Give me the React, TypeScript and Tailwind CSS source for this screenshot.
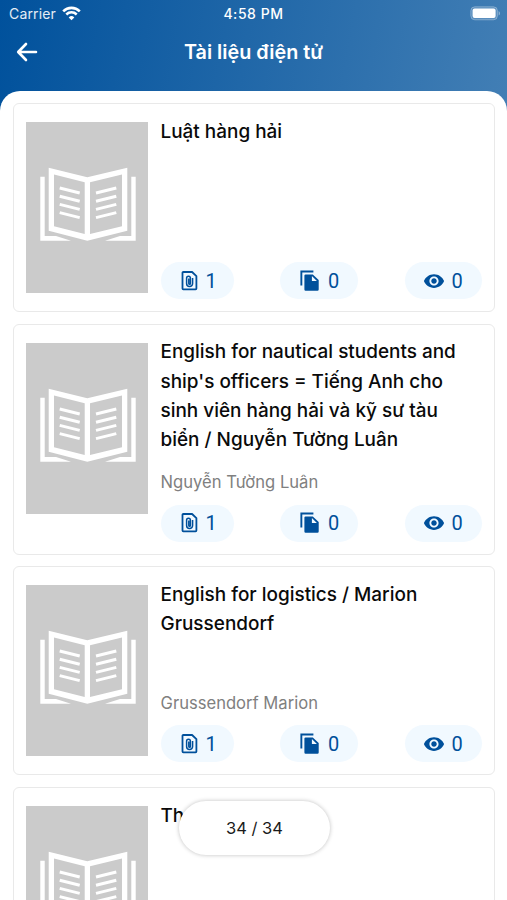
import React from "react";
import { MdVisibility } from "react-icons/md";

interface Doc {
  title: string;
  author?: string;
  stats?: { files: number; copies: number; views: number };
}

const docs: Doc[] = [
  { title: "Luật hàng hải", stats: { files: 1, copies: 0, views: 0 } },
  {
    title:
      "English for nautical students and ship's officers = Tiếng Anh cho sinh viên hàng hải và kỹ sư tàu biển / Nguyễn Tường Luân",
    author: "Nguyễn Tường Luân",
    stats: { files: 1, copies: 0, views: 0 },
  },
  {
    title: "English for logistics / Marion Grussendorf",
    author: "Grussendorf Marion",
    stats: { files: 1, copies: 0, views: 0 },
  },
  { title: "Th" },
];

function StatusBar() {
  return (
    <div className="grid h-[27px] grid-cols-3 items-center pr-[6px] pl-[9px] text-[14px]">
      <div className="flex items-center gap-[6px]">
        <span className="tracking-[0.15px] text-white/90">Carrier</span>
        <svg width="19" height="15" viewBox="0 0 19 15" fill="none" stroke="white">
          <path d="M1.2 5.3a11.8 11.8 0 0 1 16.6 0" strokeWidth="2.6" />
          <path d="M4.3 8.5a7.4 7.4 0 0 1 10.4 0" strokeWidth="2.5" />
          <path d="M9.5 14.3 6.7 11.4a4 4 0 0 1 5.6 0z" fill="white" stroke="none" />
        </svg>
      </div>
      <span className="-ml-[3px] text-center font-medium tracking-[0.55px]">4:58 PM</span>
      <svg className="justify-self-end" width="31" height="15" viewBox="0 0 31 15">
        <rect x="0.8" y="0.8" width="26.6" height="13" rx="4" fill="white" fillOpacity="0.15" stroke="white" strokeOpacity="0.3" />
        <rect x="2.6" y="2.6" width="23" height="9.4" rx="2" fill="white" />
        <path d="M28.7 5v4.6c1.5-.7 1.5-3.9 0-4.6z" fill="white" fillOpacity="0.5" />
      </svg>
    </div>
  );
}

function BookCover() {
  return (
    <svg className="mt-[6px] shrink-0 bg-[#cbcbcb]" width="122" height="171" viewBox="0 0 122 171">
      <path
        fill="white"
        fillRule="evenodd"
        d="M22.7 45.7 61.3 55.3 101.3 45.7V108.7L61.3 118.7 22.7 108.7zM28 52.5V104.3L58.7 112V60.3zM96 52.5 64 60.3V112L96 104.3z"
      />
      <path
        fill="white"
        d="M14.3 54.7h4.4V114H30l15 4.7H14.3zM109.7 54.7h-4.4V114H94l-15 4.7h30.7z"
      />
      <path
        stroke="white"
        strokeWidth="3"
        d="M33.7 66l20 5M33.7 74.2l20 5M33.7 82.4l20 5M33.7 90.6l20 5M90.3 66l-20.3 5M90.3 74.2l-20.3 5M90.3 82.4l-20.3 5M90.3 90.6l-20.3 5"
      />
    </svg>
  );
}

function FileClipIcon() {
  return (
    <svg className="shrink-0" width="22" height="22" viewBox="0 0 22 22" fill="none" stroke="currentColor">
      <path
        d="M4.3 2h8.8l4.3 4.2v12.4a.8.8 0 0 1-.8.8H4.3a.8.8 0 0 1-.8-.8V2.8a.8.8 0 0 1 .8-.8z"
        strokeWidth="1.8"
        strokeLinejoin="round"
      />
      <path
        d="M13.6 8v5.5a3 3 0 0 1-6 0V8.2a1.9 1.9 0 0 1 3.8 0v5.2a.8.8 0 0 1-1.6 0V8.4"
        strokeWidth="1.5"
      />
    </svg>
  );
}

function CopyIcon() {
  return (
    <svg className="shrink-0" width="22" height="22" viewBox="0 0 22 22" fill="currentColor">
      <path d="M2.4.6h13v1.9H4.3v12.9H2.4z" />
      <path
        fillRule="evenodd"
        d="M7.6 4.4h7.2l5.9 5.7v9.5a1.2 1.2 0 0 1-1.2 1.2H7.6a1.2 1.2 0 0 1-1.2-1.2v-14a1.2 1.2 0 0 1 1.2-1.2zM13.9 5.9v5h5z"
      />
    </svg>
  );
}

function Stat({ icon, value, className }: { icon: React.ReactNode; value: number; className: string }) {
  return (
    <div className={`flex h-[37px] items-center rounded-full bg-[#f1f9ff] pl-[18px] text-[#00509b] ${className}`}>
      {icon}
      <span className="font-['Roboto','Noto_Sans',sans-serif] text-[20px] leading-none">{value}</span>
    </div>
  );
}

function DocCard({ doc }: { doc: Doc }) {
  return (
    <div className="flex min-h-[209px] gap-[13px] rounded-[6px] border border-[#e9e9e9] p-3">
      <BookCover />
      <div className="flex flex-1 flex-col">
        <h2 className="pt-[0.7px] pr-4 text-[18.95px] leading-[29.25px] font-medium text-[#0a0a0a]">
          {doc.title}
        </h2>
        <p className="mt-auto pt-[15px] pb-[9px] text-[16.6px] leading-[26.5px] text-[#808080]">
          {doc.author}
        </p>
        {doc.stats && (
          <div className="flex justify-between">
            <Stat className="w-[73px] gap-[5px]" icon={<FileClipIcon />} value={doc.stats.files} />
            <Stat className="w-[78px] gap-2" icon={<CopyIcon />} value={doc.stats.copies} />
            <Stat className="w-[77px] gap-[7px]" icon={<MdVisibility size={22} />} value={doc.stats.views} />
          </div>
        )}
      </div>
    </div>
  );
}

export default function App() {
  return (
    <div className="relative flex h-[900px] w-[507px] flex-col overflow-hidden bg-[linear-gradient(100deg,#00519c_0%,#4d86b9_92%)] font-['Inter','Noto_Sans',sans-serif]">
      <header className="h-[91px] text-white">
        <StatusBar />
        <div className="grid h-[50px] grid-cols-[40px_1fr_40px] items-center px-4">
          <svg width="22" height="20" viewBox="0 0 22 20" fill="none" stroke="white" strokeWidth="2.6" strokeLinecap="round" strokeLinejoin="round">
            <path d="M20 10H2.5M10 2 2.2 10 10 18" />
          </svg>
          <h1 className="pt-px text-center text-[19.8px] font-semibold">Tài liệu điện tử</h1>
        </div>
      </header>
      <main className="flex-1 overflow-hidden rounded-t-[20px] bg-white px-[12.5px] pt-3">
        <div className="flex flex-col gap-[11.6px]">
          {docs.map((doc, i) => (
            <DocCard key={i} doc={doc} />
          ))}
        </div>
      </main>
      <div className="absolute top-[801px] left-[179px] flex h-[54px] w-[151px] items-center justify-center rounded-full bg-white text-[16.5px] text-[#1a1a1a] shadow-[0_0_4px_rgba(0,0,0,0.25)]">
        34 / 34
      </div>
    </div>
  );
}
